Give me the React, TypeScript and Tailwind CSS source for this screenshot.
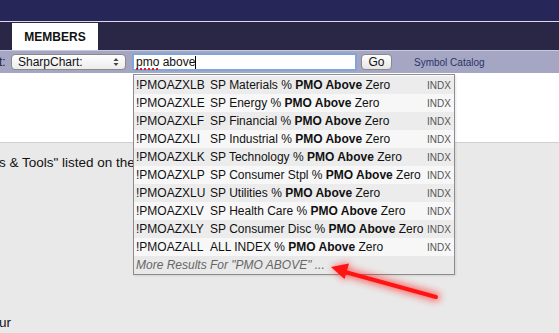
import React from "react";

const rows = [
  ["!PMOAZXLB", "SP Materials %"],
  ["!PMOAZXLE", "SP Energy %"],
  ["!PMOAZXLF", "SP Financial %"],
  ["!PMOAZXLI", "SP Industrial %"],
  ["!PMOAZXLK", "SP Technology %"],
  ["!PMOAZXLP", "SP Consumer Stpl %"],
  ["!PMOAZXLU", "SP Utilities %"],
  ["!PMOAZXLV", "SP Health Care %"],
  ["!PMOAZXLY", "SP Consumer Disc %"],
  ["!PMOAZALL", "ALL INDEX %"],
];

export default function App() {
  return (
    <div className="relative w-[559px] h-[333px] overflow-hidden bg-[#e9e9e9] font-['Liberation_Sans',Arial,sans-serif] text-[#111]">
      <div className="h-[21px] bg-[#262658]" />
      <div className="h-px bg-[#dcdce8]" />
      <div className="h-[28px] bg-[#2a2646] flex pt-px">
        <div className="ml-[12px] w-[86px] bg-white flex items-center justify-center text-[12px] font-bold text-[#111]">
          MEMBERS
        </div>
      </div>
      <div className="h-px bg-[#c9cadb]" />
      <div className="h-[22px] bg-[#a4a6c4] flex items-center text-[12px]">
        <span className="w-[12px] text-[#222] leading-none -ml-px">t:</span>
        <div className="w-[115px] h-[16px] rounded-[4px] border border-[#8a8a8a] bg-gradient-to-b from-white to-[#ececec] flex items-center justify-between pl-[6px] pr-[6px] text-[12px] text-[#111]">
          <span>SharpChart:</span>
          <svg width="6" height="10" viewBox="0 0 6 10">
            <path d="M3 1 L5.5 4 H0.5 Z" fill="#444" />
            <path d="M3 9 L5.5 6 H0.5 Z" fill="#444" />
          </svg>
        </div>
        <div className="ml-[6px] w-[225px] h-[18px] rounded-[2px] border-2 border-[#7ea7d8] bg-white flex items-center pl-[2px] text-[12px] text-[#111]">
          <span className="underline decoration-dotted decoration-[#e02020] decoration-2 underline-offset-2">pmo</span>
          <span>&nbsp;above</span>
          <span className="w-px h-[13px] bg-black" />
        </div>
        <div className="ml-[4px] w-[31px] h-[16px] rounded-[4px] border border-[#8a8a8a] bg-gradient-to-b from-white to-[#e6e6e6] flex items-center justify-center text-[12px] text-[#111]">
          Go
        </div>
        <span className="ml-[22px] text-[10px] text-[#2d3466]">Symbol Catalog</span>
      </div>
      <div className="h-[70px] bg-white border-b border-[#cfcfcf]" />
      <div className="text-[13.5px] text-[#111] mt-[10px] -ml-[1px] whitespace-nowrap">
        s &amp; Tools" listed on the
      </div>
      <div className="text-[13.5px] text-[#111] mt-[140px] -ml-[1px]">ur</div>

      <div className="absolute left-[133px] top-[74px] w-[322px] border border-[#8c8c8c] bg-white pt-px shadow-[1px_1px_2px_rgba(0,0,0,0.1)]">
        {rows.map(([sym, desc], i) => (
          <div
            key={sym}
            className={`h-[18px] flex items-center pl-[2px] pr-[3px] text-[12px] ${i % 2 === 0 ? "bg-[#ececec]" : "bg-[#f7f7f7]"}`}
          >
            <span className="w-[74px] shrink-0">{sym}</span>
            <span className="flex-1 min-w-0 whitespace-nowrap">
              {desc} <b>PMO Above</b> Zero
            </span>
            <span className="shrink-0 text-[10px] text-[#555]">INDX</span>
          </div>
        ))}
        <div className="h-[18px] flex items-center text-[12px] pl-[2px] bg-[#e9e9e9] italic text-[#666]">
          More Results For "PMO ABOVE" ...
        </div>
      </div>

      <svg className="absolute left-0 top-0" width="559" height="333" viewBox="0 0 559 333">
        <defs>
          <filter id="glow" x="-20%" y="-50%" width="140%" height="200%">
            <feGaussianBlur stdDeviation="3.5" />
          </filter>
        </defs>
        <g filter="url(#glow)" opacity="0.6">
          <line x1="436" y1="297" x2="345" y2="272" stroke="#ff2020" strokeWidth="9" strokeLinecap="round" />
          <path d="M331 267 L350 262 L345 281 Z" fill="#ff2020" />
        </g>
        <line x1="436" y1="297" x2="345" y2="272" stroke="#ff1414" strokeWidth="4" strokeLinecap="round" />
        <path d="M331 267 L349 263.5 L344.5 279 Z" fill="#ff1414" />
      </svg>
    </div>
  );
}
